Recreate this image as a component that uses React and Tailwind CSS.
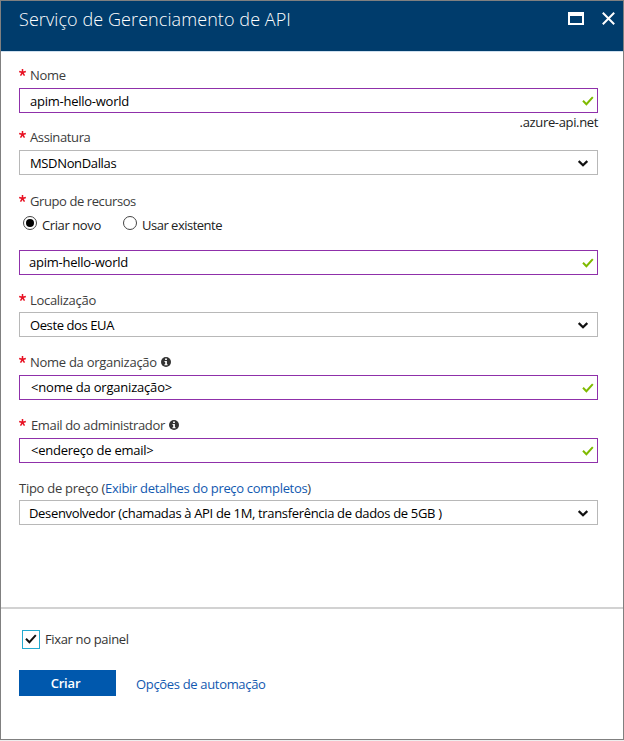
function Check({ className, color = '#7fba00', width = 2 }) {
  return (
    <svg viewBox="0 0 12 10" className={className} fill="none" stroke={color} strokeWidth={width}>
      <path d="M1 4.8 L4.4 8.2 L10.8 1.2" />
    </svg>
  );
}

function Info() {
  return (
    <svg viewBox="0 0 10 10" className="ml-1 h-[10px] w-[10px] shrink-0">
      <circle cx="5" cy="5" r="5" fill="#333" />
      <path d="M4.1 1.5h1.8v1.5H4.1z M3.5 4h2.4v3.2h.7v1H3.4v-1h.8V4.9h-.7z" fill="#fff" />
    </svg>
  );
}

function Label({ children, className, textClass = '', info }) {
  return (
    <div className={`flex h-5 items-center text-[#3c3c3c] ${className}`}>
      <svg viewBox="0 0 8 8" className="-mt-[5px] mr-1 h-[7px] w-[7px] shrink-0" stroke="#e81123" strokeWidth="1.7">
        <path d="M4 0V4M4 4L0.2 2.8M4 4L7.8 2.8M4 4L1.7 7.5M4 4L6.3 7.5" />
      </svg>
      <span className={textClass}>{children}</span>
      {info && <Info />}
    </div>
  );
}

function Input({ children, className = '', textClass = '' }) {
  return (
    <div className={`flex h-[25px] items-center justify-between border border-[#8f30aa] pr-[3px] text-black ${className}`}>
      <span className={textClass}>{children}</span>
      <Check className="h-[10px] w-3" />
    </div>
  );
}

function Select({ children, className = '', textClass = '' }) {
  return (
    <div className={`flex h-[25px] items-center justify-between border border-[#b8b8b8] pr-[9px] text-black ${className}`}>
      <span className={textClass}>{children}</span>
      <svg viewBox="0 0 10 7" className="mt-px h-[7px] w-[10px]" fill="none" stroke="#111" strokeWidth="2.3">
        <path d="M0.7 1 L5 5.2 L9.3 1" />
      </svg>
    </div>
  );
}

export default function App() {
  return (
    <div className="h-[741px] w-[624px] bg-[#eeeeee] pb-px font-['Open_Sans','Noto_Sans',sans-serif] text-[13px] leading-5 whitespace-nowrap">
      <div className="flex h-[740px] flex-col border border-[#808080] bg-white">
        <header className="flex h-[51px] shrink-0 items-start justify-between border-b border-[#cfdfee] bg-[#003c6c] pr-[8px] pl-[18px] text-white">
          <h1 className="pt-[6px] text-[18px] leading-6 font-light tracking-[0.08px]">Serviço de Gerenciamento de API</h1>
          <div className="flex items-center gap-[18px] pt-[11px]">
            <div className="h-[13px] w-4 border-2 border-t-4 border-white" />
            <svg viewBox="0 0 13 13" className="h-[13px] w-[13px]" stroke="#fff" strokeWidth="2">
              <path d="M0.8 0.8L12.2 12.2M12.2 0.8L0.8 12.2" />
            </svg>
          </div>
        </header>

        <main className="flex h-[555px] shrink-0 flex-col pt-[13px] pr-[25px] pl-[18px]">
          <Label className="mb-[3px]" textClass="tracking-[-0.3px]">Nome</Label>
          <Input textClass="pl-[10px] tracking-[-0.25px]">apim-hello-world</Input>
          <div className="h-[14px] text-right leading-[18px] tracking-[-0.35px] text-[#222]">.azure-api.net</div>

          <Label className="mb-[3px]" textClass="tracking-[-0.38px]">Assinatura</Label>
          <Select textClass="pl-[10px] tracking-[-0.35px]">MSDNonDallas</Select>

          <Label className="mt-4" textClass="tracking-[-0.41px]">Grupo de recursos</Label>
          <div className="mt-1 flex h-5 items-center text-[#222]">
            <span className="-mt-1 ml-1 flex h-[14px] w-[14px] items-center justify-center rounded-full border border-[#444]">
              <span className="h-2 w-2 rounded-full bg-black" />
            </span>
            <span className="ml-[5px] w-[82px] tracking-[-0.4px]">Criar novo</span>
            <span className="-mt-1 -ml-px h-[14px] w-[14px] rounded-full border border-[#444]" />
            <span className="ml-[5px] tracking-[-0.5px]">Usar existente</span>
          </div>
          <Input className="mt-[15px]" textClass="pl-[9px] pb-[2px] tracking-[-0.25px]">apim-hello-world</Input>

          <Label className="mt-[15px] mb-[2px]" textClass="tracking-[-0.3px]">Localização</Label>
          <Select textClass="pl-[10px] tracking-[-0.4px]">Oeste dos EUA</Select>

          <Label className="mt-[15px] mb-[3px]" textClass="tracking-[-0.28px]" info>Nome da organização</Label>
          <Input textClass="pl-[11px] pb-px tracking-[-0.2px]">&lt;nome da organização&gt;</Input>

          <Label className="mt-[15px] mb-[3px]" textClass="pl-px tracking-[-0.36px]" info>Email do administrador</Label>
          <Input textClass="pl-[11px] pb-[2px] tracking-[-0.25px]">&lt;endereço de email&gt;</Input>

          <div className="mt-[15px] mb-[2px] flex h-5 text-[#3c3c3c]">
            <span className="tracking-[-0.27px]">Tipo de preço (</span>
            <a className="tracking-[-0.31px] text-[#1259b0]">Exibir detalhes do preço completos</a>
            <span>)</span>
          </div>
          <Select textClass="pl-[9px] tracking-[-0.335px]">Desenvolvedor (chamadas à API de 1M, transferência de dados de 5GB )</Select>
        </main>

        <footer className="flex grow flex-col border-t-2 border-[#d2d2d2] pt-[20px] pl-[18px]">
          <label className="flex h-5 items-center text-[#333]">
            <span className="ml-[3px] flex h-[19px] w-[18px] items-center justify-center border border-[#22aad0]">
              <Check className="h-[10px] w-3" color="#111" />
            </span>
            <span className="ml-[5px] tracking-[-0.35px]">Fixar no painel</span>
          </label>
          <div className="mt-[21px] flex items-center">
            <button className="h-[26px] w-[97px] bg-[#0058ad] pr-1 font-semibold tracking-[-0.2px] text-white">Criar</button>
            <a className="ml-5 pt-[2px] tracking-[-0.33px] text-[#1259b0]">Opções de automação</a>
          </div>
        </footer>
      </div>
    </div>
  );
}
